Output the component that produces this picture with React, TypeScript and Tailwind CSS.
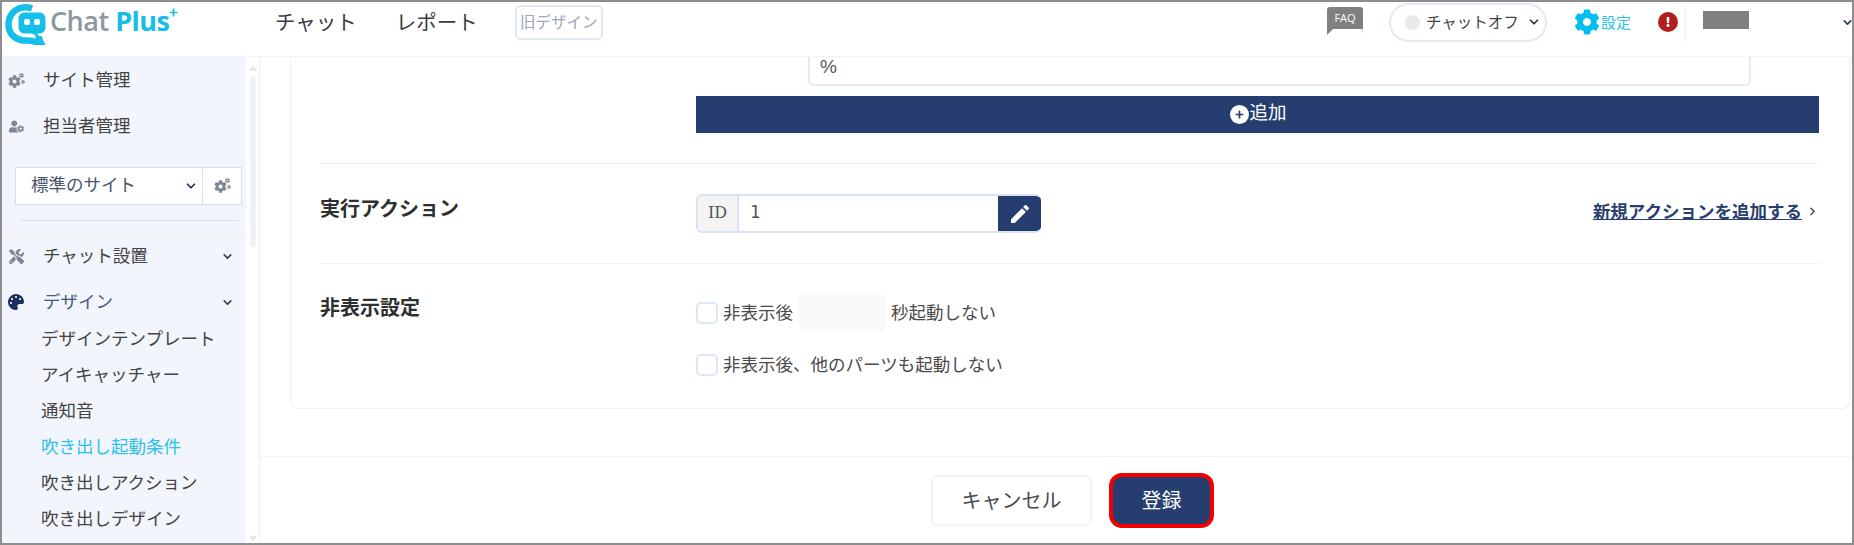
// App.tsx
import React from "react";
import {
  FaCog,
  FaUserCog,
  FaTools,
  FaPalette,
  FaExclamation,
  FaPlus,
} from "react-icons/fa";
import { MdEdit } from "react-icons/md";
import { ChevronDown, ChevronRight } from "lucide-react";

const Logo: React.FC = () => (
  <div className="flex items-center w-[180px] shrink-0 relative">
    <svg width="46" height="42" viewBox="0 0 46 42" className="shrink-0">
      <path
        d="M30 5.5C27.5 4.6 25.5 4.2 23.5 4.2C13.5 4.2 6.5 12 6.5 21.5C6.5 31 14 38 24 37.5C30 37.2 35 39 39.5 41C37.5 37.5 36.5 35 36.5 33"
        fill="none"
        stroke="#14bfe8"
        strokeWidth="6.5"
      />
      <path
        d="M23 9.5H37C41 9.5 43.5 12 43.5 16V24C43.5 28 41 30.5 37 30.5H35.5L38 35L30 30.5H23C19 30.5 16.5 28 16.5 24V16C16.5 12 19 9.5 23 9.5Z"
        fill="#14bfe8"
      />
      <rect x="22" y="16" width="6" height="6" rx="2" fill="#ffffff" />
      <rect x="32" y="16" width="6" height="6" rx="2" fill="#ffffff" />
    </svg>
    <span className="ml-[2px] -mt-[8px] text-[27px] tracking-[-0.5px] leading-none font-semibold font-['Open_Sans',sans-serif] text-[#8b9aa1] whitespace-nowrap">
      Chat <span className="text-[#16bde6] font-bold">Plus</span>
    </span>
    <FaPlus size={9} className="absolute left-[167px] top-[5px] text-[#16bde6]" />
  </div>
);

const Header: React.FC = () => (
  <header className="h-[55px] shrink-0 flex items-start border-b border-[#eef2f9] bg-white">
    <div className="flex items-center h-[42px] mt-[1px]">
      <Logo />
    </div>
    <nav className="flex items-center h-[38px] ml-[93px] gap-[39px] text-[20.5px] text-[#3c3c3c]">
      <span>チャット</span>
      <span>レポート</span>
    </nav>
    <div className="ml-[37px] mt-[3px] w-[88px] h-[35px] flex items-center justify-center pb-[2px] rounded-[6px] border-2 border-[#dfe6f4] text-[15.5px] text-[#9aa7bd] whitespace-nowrap">
      旧デザイン
    </div>

    <div className="ml-auto flex items-start">
      <div className="w-[36px] mt-[5px] relative">
        <div className="h-[22px] rounded-t-[3px] bg-[#808080] text-white text-[11px] flex items-center justify-center font-['Open_Sans',sans-serif]">
          FAQ
        </div>
        <svg width="36" height="6" viewBox="0 0 36 6" className="block">
          <path d="M0 0H6L0 6Z" fill="#808080" />
          <path d="M32 0H36V5Z" fill="#eceee4" />
        </svg>
      </div>
      <div className="ml-[26px] mt-[1px] w-[158px] h-[39px] flex items-center rounded-full border-2 border-[#e3e9f6] pl-[14px] pb-[1px] text-[15.5px] text-[#444]">
        <span className="w-[15px] h-[15px] rounded-full bg-[#e9e9e9] shrink-0" />
        <span className="ml-[6px] pb-[1px] whitespace-nowrap">チャットオフ</span>
        <ChevronDown size={14} strokeWidth={3} className="ml-[8px] text-[#333]" />
      </div>
      <div className="ml-[27px] mt-[7px] flex items-center text-[#00bff0]">
        <FaCog size={26} />
        <span className="ml-[1px] text-[15px] text-[#2cc3ef]">設定</span>
      </div>
      <div className="ml-[27px] mt-[10px] w-[20px] h-[20px] rounded-full bg-[#b41d1d] flex items-center justify-center">
        <FaExclamation size={10} className="text-white" />
      </div>
      <div className="ml-[7px] mt-[2px] w-px h-[38px] bg-[#eef1f7]" />
      <div className="ml-[17px] mt-[9px] w-[46px] h-[18px] bg-[#808080]" />
      <ChevronDown size={13} strokeWidth={3} className="ml-[92px] mt-[14px] mr-[-2px] text-[#2b3f66]" />
    </div>
  </header>
);

const SmallGears: React.FC = () => (
  <span className="relative inline-block w-[17px] h-[15px] text-[#7d8795]">
    <FaCog size={13} className="absolute left-0 bottom-0" />
    <FaCog size={5} className="absolute right-[1px] top-0" />
    <FaCog size={4} className="absolute right-0 top-[7px]" />
  </span>
);

const MenuRow: React.FC<{
  icon: React.ReactNode;
  label: string;
  height: string;
  chevron?: boolean;
  labelColor?: string;
}> = ({ icon, label, height, chevron, labelColor = "text-[#444]" }) => (
  <div className={`flex items-center pl-[5px] ${height}`}>
    <span className="w-[18px] flex justify-center shrink-0">{icon}</span>
    <span className={`ml-[18px] pb-[2px] text-[17.5px] whitespace-nowrap ${labelColor}`}>{label}</span>
    {chevron && (
      <ChevronDown size={13} strokeWidth={3} className="ml-auto mr-[12px] text-[#3a3f4a]" />
    )}
  </div>
);

const subItems = [
  { label: "デザインテンプレート", active: false },
  { label: "アイキャッチャー", active: false },
  { label: "通知音", active: false },
  { label: "吹き出し起動条件", active: true },
  { label: "吹き出しアクション", active: false },
  { label: "吹き出しデザイン", active: false },
];

const Sidebar: React.FC = () => (
  <aside className="w-[244px] shrink-0 bg-[#f2f5fb] overflow-hidden">
    <MenuRow icon={<SmallGears />} label="サイト管理" height="h-[46px]" />
    <MenuRow icon={<FaUserCog size={15} className="text-[#7d8795]" />} label="担当者管理" height="h-[46px]" />

    <div className="mt-[18px] ml-[13px] mr-[4px] h-[38px] flex bg-white border border-[#d7e0f0]">
      <div className="flex-1 flex items-center pl-[15px] text-[17.5px] text-[#4a5568] whitespace-nowrap">
        <span className="pb-[3px]">標準のサイト</span>
        <ChevronDown size={14} strokeWidth={3} className="ml-auto mr-[4px] text-[#1d2f5e]" />
      </div>
      <div className="w-[39px] border-l border-[#d7e0f0] flex items-center justify-center pb-[2px]">
        <SmallGears />
      </div>
    </div>
    <div className="mt-[15px] ml-[18px] mr-[7px] h-px bg-[#d9e1ef]" />
    <div className="mt-[16px] h-px bg-[#f6efe0]" />

    <MenuRow
      icon={<FaTools size={15} className="text-[#7d8795]" />}
      label="チャット設置"
      height="h-[37px]"
      chevron
    />
    <div className="mt-[9px]">
      <MenuRow
        icon={<FaPalette size={16} className="text-[#1d2f5e]" />}
        label="デザイン"
        height="h-[36px]"
        chevron
        labelColor="text-[#46597e]"
      />
    </div>
    {subItems.map((item) => (
      <div
        key={item.label}
        className={`h-[36px] flex items-center pl-[39px] text-[17.5px] whitespace-nowrap ${
          item.active ? "text-[#2bc0ee]" : "text-[#444]"
        }`}
      >
        {item.label}
      </div>
    ))}
  </aside>
);

const Scrollbar: React.FC = () => (
  <div className="w-[14px] shrink-0 flex flex-col items-center bg-white border-r border-[#e9eef7]">
    <svg width="8" height="6" viewBox="0 0 8 6" className="mt-[8px] shrink-0">
      <path d="M4 0L8 6H0Z" fill="#e4e8ee" />
    </svg>
    <div className="mt-[5px] w-[6px] h-[171px] rounded-full bg-[#eff2f7]" />
    <svg width="8" height="6" viewBox="0 0 8 6" className="mt-auto mb-[1px] shrink-0">
      <path d="M0 0H8L4 6Z" fill="#e4e8ee" />
    </svg>
  </div>
);

const Checkbox: React.FC = () => (
  <span className="w-[22px] h-[22px] shrink-0 rounded-[5px] border-2 border-[#dde6f6] bg-white" />
);

const Form: React.FC = () => (
  <div className="ml-[29px] mr-[30px] text-[#444]">
    <div className="ml-[376px]">
      <div className="ml-[112px] w-[943px] h-[29px] flex items-center pl-[10px] pb-[7px] rounded-b-[6px] border-2 border-t-0 border-[#e3e9f6] text-[19px] text-[#555] font-['Liberation_Sans',sans-serif]">
        %
      </div>
      <button className="mt-[10px] w-full h-[37px] flex items-center justify-center pl-[2px] pb-[5px] bg-[#263d70] text-white text-[18.5px]">
        <span className="w-[19px] h-[19px] mt-[4px] rounded-full bg-white flex items-center justify-center">
          <FaPlus size={9} className="text-[#263d70]" />
        </span>
        追加
      </button>
    </div>

    <div className="mt-[30px] h-[100px] pt-[30px] flex border-t border-[#eef1f8]">
      <div className="w-[376px] h-[28px] leading-[28px] text-[20px] font-bold text-[#2f2f2f]">実行アクション</div>
      <div className="w-[345px] h-[39px] flex rounded-[6px] overflow-hidden border-2 border-[#d9e3f6] border-r-0">
        <div className="w-[41px] shrink-0 flex items-center justify-center pb-[1px] bg-[#f4f4f4] border-r-2 border-[#d9e3f6] font-['DejaVu_Serif',serif] text-[16px] text-[#555]">
          ID
        </div>
        <div className="flex-1 flex items-center pl-[11px] pb-[1px] font-['DejaVu_Sans_Mono',monospace] text-[17px] text-[#555]">
          1
        </div>
        <div className="w-[43px] -my-[2px] shrink-0 flex items-center justify-center bg-[#263d70]">
          <MdEdit size={24} className="text-white" />
        </div>
      </div>
      <div className="ml-auto mt-[3px] flex items-center h-[28px]">
        <span className="text-[17.5px] font-bold text-[#2a3f6e] underline whitespace-nowrap">新規アクションを追加する</span>
        <ChevronRight size={13} strokeWidth={2.5} className="ml-[4px] text-[#444]" />
      </div>
    </div>

    <div className="h-[121px] pt-[30px] flex border-t border-[#eef1f8]">
      <div className="w-[376px] h-[28px] leading-[28px] text-[20px] font-bold text-[#2f2f2f] -mt-[1px]">非表示設定</div>
      <div className="text-[17.5px] text-[#4a4a4a] whitespace-nowrap">
        <div className="h-[38px] flex items-center">
          <Checkbox />
          <span className="ml-[5px] pb-[2px]">非表示後</span>
          <span className="ml-[5px] w-[88px] h-[38px] rounded-[6px] bg-[#fafafa]" />
          <span className="ml-[5px] pb-[2px]">秒起動しない</span>
        </div>
        <div className="mt-[14px] h-[38px] flex items-center">
          <Checkbox />
          <span className="ml-[5px] pb-[2px]">非表示後、他のパーツも起動しない</span>
        </div>
      </div>
    </div>
  </div>
);

const Footer: React.FC = () => (
  <div className="flex-1 flex items-center justify-center gap-[17px] pl-[33px] border-t border-[#eef2f9]">
    <button className="w-[161px] h-[51px] pb-[1px] rounded-[6px] border-2 border-[#f0f3f9] bg-white text-[20px] text-[#4a4a4a]">
      キャンセル
    </button>
    <button className="w-[105px] h-[55px] pb-[1px] rounded-[13px] border-4 border-[#f00000] bg-[#263d70] text-[20px] text-white">
      登録
    </button>
  </div>
);

export default function App() {
  return (
    <div className="w-full h-[545px] flex flex-col bg-white border-2 border-[#8e8e8e] overflow-hidden font-['Noto_Sans_CJK_JP','Noto_Sans',sans-serif]">
      <Header />
      <div className="flex-1 flex min-h-0">
        <Sidebar />
        <Scrollbar />
        <main className="flex-1 flex flex-col min-w-0">
          <div className="h-[399px] shrink-0 pl-[30px]">
            <div className="h-[352px] w-[1560px] rounded-b-[8px] border border-t-0 border-[#edf1f8]">
              <Form />
            </div>
          </div>
          <Footer />
        </main>
      </div>
    </div>
  );
}
